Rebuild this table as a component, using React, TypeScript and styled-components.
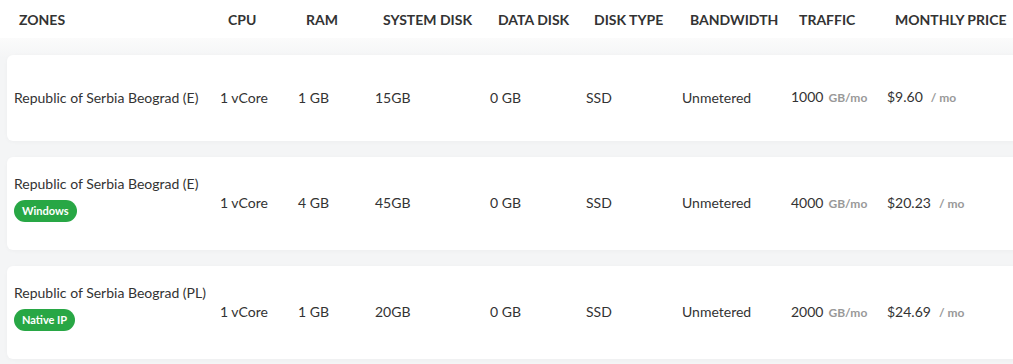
import React from 'react';
import styled, { createGlobalStyle } from 'styled-components';

const GlobalStyle = createGlobalStyle`
  html, body {
    margin: 0;
    padding: 0;
    background: #ffffff;
    overflow: hidden;
  }
  body {
    font-family: 'Source Sans Pro', Lato, 'Liberation Sans', sans-serif;
    color: #333333;
  }
`;

const COLS = '206px 78px 77px 115px 96px 96px 109px 96px 1fr';

const Page = styled.div`
  width: 1013px;
  height: 364px;
  overflow: hidden;
`;

const HeaderRow = styled.div`
  display: grid;
  grid-template-columns: ${COLS};
  height: 38px;
  align-items: center;
  padding-left: 7px;
  width: 1040px;
  background: #ffffff;
`;

const HeadCell = styled.div<{ $pad?: number }>`
  padding-left: ${(p) => p.$pad ?? 15}px;
  font-size: 14px;
  font-weight: 700;
  color: #333;
  white-space: nowrap;
`;

const Body = styled.div`
  display: flex;
  flex-direction: column;
  gap: 16px;
  padding: 17px 0 6px 7px;
  background: linear-gradient(#fbfbfb 0px, #f4f5f6 20px);
`;

const Card = styled.div`
  display: grid;
  grid-template-columns: ${COLS};
  align-items: center;
  width: 1040px;
  min-height: 86px;
  box-sizing: border-box;
  padding: 17px 0 18px;
  background: #ffffff;
  border-radius: 6px;
  box-shadow: 0 1px 4px rgba(0, 0, 0, 0.03);
`;

const Cell = styled.div`
  padding-left: 7px;
  font-size: 14px;
  line-height: 20px;
  color: #333;
  white-space: nowrap;
`;

const ZoneCell = styled(Cell)`
  display: flex;
  flex-direction: column;
  align-items: flex-start;
`;

const Badge = styled.span`
  display: inline-flex;
  align-items: center;
  height: 22px;
  margin: 6px 0 10px;
  padding: 0 8px;
  border-radius: 11px;
  background: #28a745;
  color: #ffffff;
  font-size: 11px;
  font-weight: 700;
  line-height: 22px;
`;

const Unit = styled.span<{ $gap: number }>`
  margin-left: ${(p) => p.$gap}px;
  font-size: 12px;
  font-weight: 700;
  color: #999999;
`;

type Plan = {
  zone: string;
  badge?: string;
  ram: string;
  disk: string;
  traffic: string;
  price: string;
};

const plans: Plan[] = [
  { zone: 'Republic of Serbia Beograd (E)', ram: '1 GB', disk: '15GB', traffic: '1000', price: '$9.60' },
  { zone: 'Republic of Serbia Beograd (E)', badge: 'Windows', ram: '4 GB', disk: '45GB', traffic: '4000', price: '$20.23' },
  { zone: 'Republic of Serbia Beograd (PL)', badge: 'Native IP', ram: '1 GB', disk: '20GB', traffic: '2000', price: '$24.69' },
];

const headers = ['ZONES', 'CPU', 'RAM', 'SYSTEM DISK', 'DATA DISK', 'DISK TYPE', 'BANDWIDTH', 'TRAFFIC', 'MONTHLY PRICE'];

export default function App() {
  return (
    <Page>
      <GlobalStyle />
      <HeaderRow>
        {headers.map((h, i) => (
          <HeadCell key={h} $pad={i === 0 ? 12 : 15}>
            {h}
          </HeadCell>
        ))}
      </HeaderRow>
      <Body>
        {plans.map((p, i) => (
          <Card key={i}>
            <ZoneCell>
              <span>{p.zone}</span>
              {p.badge && <Badge>{p.badge}</Badge>}
            </ZoneCell>
            <Cell>1 vCore</Cell>
            <Cell>{p.ram}</Cell>
            <Cell>{p.disk}</Cell>
            <Cell>0 GB</Cell>
            <Cell>SSD</Cell>
            <Cell>Unmetered</Cell>
            <Cell>
              {p.traffic}
              <Unit $gap={5}>GB/mo</Unit>
            </Cell>
            <Cell>
              {p.price}
              <Unit $gap={8}>/ mo</Unit>
            </Cell>
          </Card>
        ))}
      </Body>
    </Page>
  );
}
